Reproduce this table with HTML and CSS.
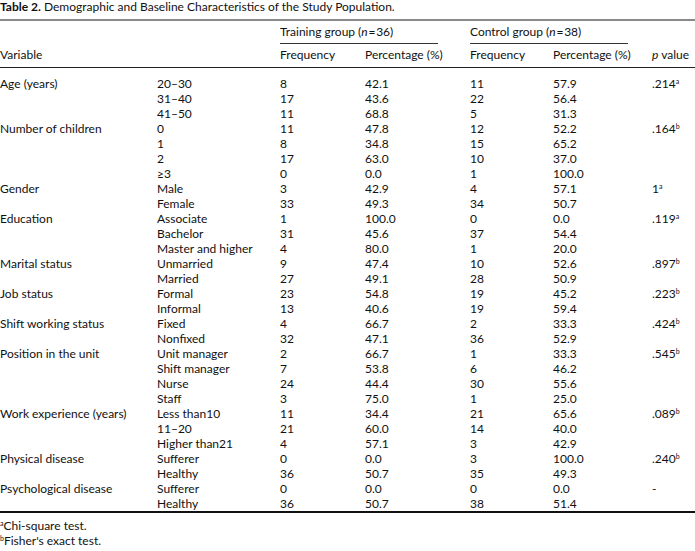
FILE: index.html
```
<!DOCTYPE html>
<html lang="en">
<head>
<meta charset="utf-8">
<title>Table 2</title>
<link rel="stylesheet" href="styles.css">
</head>
<body>
<div class="page">
  <p class="caption"><b>Table 2.</b> Demographic and Baseline Characteristics of the Study Population.</p>
  <table class="data">
    <colgroup>
      <col class="c-var"><col class="c-cat"><col class="c-f1"><col class="c-p1"><col class="c-f2"><col class="c-p2"><col class="c-pv">
    </colgroup>
    <thead>
      <tr class="group-row">
        <th></th><th></th>
        <th colspan="2"><span class="group">Training group (<i>n</i>&#8202;=&#8202;36)</span></th>
        <th colspan="2"><span class="group">Control group (<i>n</i>&#8202;=&#8202;38)</span></th>
        <th></th>
      </tr>
      <tr class="head-row">
        <th>Variable</th><th></th><th>Frequency</th><th>Percentage (%)</th><th>Frequency</th><th>Percentage (%)</th><th><i>p</i> value</th>
      </tr>
    </thead>
    <tbody>
      <tr><td>Age (years)</td><td>20–30</td><td>8</td><td>42.1</td><td>11</td><td>57.9</td><td>.214<sup>a</sup></td></tr>
      <tr><td></td><td>31–40</td><td>17</td><td>43.6</td><td>22</td><td>56.4</td><td></td></tr>
      <tr><td></td><td>41–50</td><td>11</td><td>68.8</td><td>5</td><td>31.3</td><td></td></tr>
      <tr><td>Number of children</td><td>0</td><td>11</td><td>47.8</td><td>12</td><td>52.2</td><td>.164<sup>b</sup></td></tr>
      <tr><td></td><td>1</td><td>8</td><td>34.8</td><td>15</td><td>65.2</td><td></td></tr>
      <tr><td></td><td>2</td><td>17</td><td>63.0</td><td>10</td><td>37.0</td><td></td></tr>
      <tr><td></td><td>≥3</td><td>0</td><td>0.0</td><td>1</td><td>100.0</td><td></td></tr>
      <tr><td>Gender</td><td>Male</td><td>3</td><td>42.9</td><td>4</td><td>57.1</td><td>1<sup>a</sup></td></tr>
      <tr><td></td><td>Female</td><td>33</td><td>49.3</td><td>34</td><td>50.7</td><td></td></tr>
      <tr><td>Education</td><td>Associate</td><td>1</td><td>100.0</td><td>0</td><td>0.0</td><td>.119<sup>a</sup></td></tr>
      <tr><td></td><td>Bachelor</td><td>31</td><td>45.6</td><td>37</td><td>54.4</td><td></td></tr>
      <tr><td></td><td>Master and higher</td><td>4</td><td>80.0</td><td>1</td><td>20.0</td><td></td></tr>
      <tr><td>Marital status</td><td>Unmarried</td><td>9</td><td>47.4</td><td>10</td><td>52.6</td><td>.897<sup>b</sup></td></tr>
      <tr><td></td><td>Married</td><td>27</td><td>49.1</td><td>28</td><td>50.9</td><td></td></tr>
      <tr><td>Job status</td><td>Formal</td><td>23</td><td>54.8</td><td>19</td><td>45.2</td><td>.223<sup>b</sup></td></tr>
      <tr><td></td><td>Informal</td><td>13</td><td>40.6</td><td>19</td><td>59.4</td><td></td></tr>
      <tr><td>Shift working status</td><td>Fixed</td><td>4</td><td>66.7</td><td>2</td><td>33.3</td><td>.424<sup>b</sup></td></tr>
      <tr><td></td><td>Nonfixed</td><td>32</td><td>47.1</td><td>36</td><td>52.9</td><td></td></tr>
      <tr><td>Position in the unit</td><td>Unit manager</td><td>2</td><td>66.7</td><td>1</td><td>33.3</td><td>.545<sup>b</sup></td></tr>
      <tr><td></td><td>Shift manager</td><td>7</td><td>53.8</td><td>6</td><td>46.2</td><td></td></tr>
      <tr><td></td><td>Nurse</td><td>24</td><td>44.4</td><td>30</td><td>55.6</td><td></td></tr>
      <tr><td></td><td>Staff</td><td>3</td><td>75.0</td><td>1</td><td>25.0</td><td></td></tr>
      <tr><td>Work experience (years)</td><td>Less than10</td><td>11</td><td>34.4</td><td>21</td><td>65.6</td><td>.089<sup>b</sup></td></tr>
      <tr><td></td><td>11–20</td><td>21</td><td>60.0</td><td>14</td><td>40.0</td><td></td></tr>
      <tr><td></td><td>Higher than21</td><td>4</td><td>57.1</td><td>3</td><td>42.9</td><td></td></tr>
      <tr><td>Physical disease</td><td>Sufferer</td><td>0</td><td>0.0</td><td>3</td><td>100.0</td><td>.240<sup>b</sup></td></tr>
      <tr><td></td><td>Healthy</td><td>36</td><td>50.7</td><td>35</td><td>49.3</td><td></td></tr>
      <tr><td>Psychological disease</td><td>Sufferer</td><td>0</td><td>0.0</td><td>0</td><td>0.0</td><td>-</td></tr>
      <tr><td></td><td>Healthy</td><td>36</td><td>50.7</td><td>38</td><td>51.4</td><td></td></tr>
    </tbody>
  </table>
  <div class="notes">
    <p><sup>a</sup>Chi-square test.</p>
    <p><sup>b</sup>Fisher's exact test.</p>
  </div>
</div>
</body>
</html>
```
FILE: styles.css
```
html, body {
  margin: 0;
  padding: 0;
  background: #fff;
}

.page {
  width: 695px;
  font-family: Lato, "Open Sans", sans-serif;
  font-size: 12px;
  color: #111;
}

.caption {
  margin: 0 0 5px;
  line-height: 14px;
  height: 14px;
}

.caption b {
  font-weight: 700;
}

.data {
  width: 695px;
  border-collapse: collapse;
  table-layout: fixed;
  border-top: 2px solid #8a8a8a;
  border-bottom: 2px solid #111;
}

.c-var { width: 157px; }
.c-cat { width: 123px; }
.c-f1 { width: 85px; }
.c-p1 { width: 105px; }
.c-f2 { width: 83px; }
.c-p2 { width: 99px; }
.c-pv { width: 43px; }

.data th,
.data td {
  padding: 0;
  text-align: left;
  font-weight: 400;
  white-space: nowrap;
  vertical-align: top;
}

.group-row th {
  padding-top: 4px;
}

.group {
  display: block;
  width: 158px;
  line-height: 14px;
  padding-bottom: 4px;
  border-bottom: 1px solid #333;
}

.head-row th {
  padding-top: 4px;
  padding-bottom: 5px;
  line-height: 14px;
  border-bottom: 1px solid #222;
}

.data td {
  height: 15px;
  line-height: 15px;
}

.data tbody tr:first-child td {
  padding-top: 8px;
}

sup {
  font-size: 7px;
  line-height: 0;
  vertical-align: 4px;
}

.notes {
  padding-top: 5px;
}

.notes p {
  margin: 0;
  line-height: 15px;
}
```
